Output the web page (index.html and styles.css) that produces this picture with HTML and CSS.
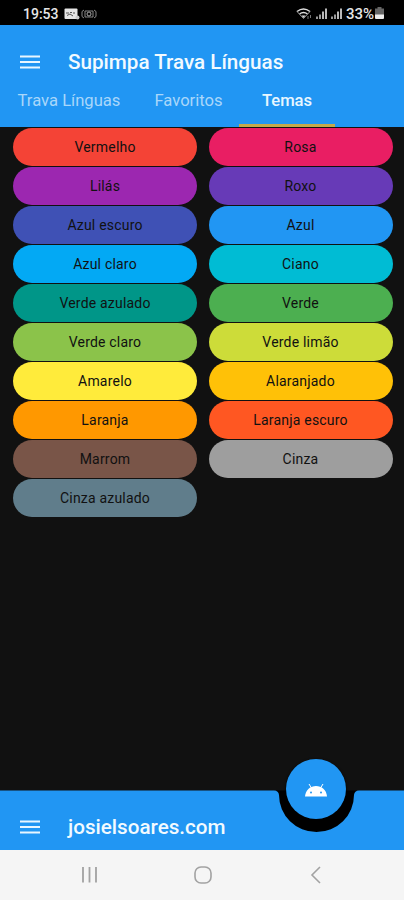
FILE: index.html
```html
<!DOCTYPE html>
<html lang="pt-BR">
  <head>
    <meta charset="UTF-8" />
    <meta name="viewport" content="width=device-width, initial-scale=1.0" />
    <title>Supimpa Trava Línguas</title>
    <link rel="stylesheet" href="styles.css">
  </head>
  <body>
    <!-- status bar -->
    <div class="status">
      <span class="clock">19:53</span>
      <svg class="notices" width="34" height="12" viewBox="0 0 34 12">
        <rect x="0.5" y="0.5" width="13" height="10.5" rx="1" fill="#e6e6e6" />
        <path d="M2 5h3M6 4.5h2M9 5h2M3 7.5l3-1.5 3 2" stroke="#555" fill="none" />
        <circle cx="13.5" cy="9.5" r="2" fill="#ccc" />
        <path d="M20 2l-2 1.500v5l2 1.500M30 2l2 1.500v5l-2 1.500M21 3h8v6h-8z" stroke="#888" fill="none" />
        <circle cx="25" cy="6" r="2" stroke="#aaa" fill="none" />
      </svg>
      <svg class="signals" width="48" height="14" viewBox="0 0 48 14">
        <path d="M1 4.500q6.500-5 13 0M3.500 7q4-3 8 0" stroke="#ddd" stroke-width="1.500" fill="none" />
        <path d="M1 4.500l6.500 7 6.500-7" stroke="#999" fill="none" />
        <path d="M5.500 8.500h4l-2 2.500z" fill="#ddd" />
        <path d="M12 9v3M14.500 8v3" stroke="#777" />
        <path d="M21 12V9.500M24 12V7.500M36 12V9.500M39 12V7.500" stroke="#aaa" stroke-width="1.800" />
        <path d="M27 12V4.500M30 12V1.500M42 12V4.500M45 12V1.500" stroke="#ccc" stroke-width="1.800" />
      </svg>
      <span class="percent">33%</span>
      <svg width="9" height="13" viewBox="0 0 9 13">
        <path d="M2.500 0h4v1.500H9V8H0V1.500h2.500z" fill="#666" />
        <path d="M0 7.500h9V11q0 1-1 1H1q-1 0-1-1z" fill="#eee" />
      </svg>
    </div>

    <!-- app bar + tabs -->
    <header class="appbar">
      <div class="title-row">
        <svg class="menu" width="20" height="14" viewBox="0 0 20 14">
          <path d="M0 1.500h20M0 7h20M0 12.500h20" stroke="#e8f6ff" stroke-width="2" />
        </svg>
        <h1>Supimpa Trava Línguas</h1>
      </div>
      <nav class="tabs">
        <a class="tab tab-first">Trava Línguas</a>
        <a class="tab tab-second">Favoritos</a>
        <a class="tab active">Temas</a>
      </nav>
    </header>

    <!-- themes -->
    <main class="themes">
      <button class="theme red">Vermelho</button>
      <button class="theme pink">Rosa</button>
      <button class="theme purple">Lilás</button>
      <button class="theme deep-purple">Roxo</button>
      <button class="theme indigo">Azul escuro</button>
      <button class="theme blue">Azul</button>
      <button class="theme light-blue">Azul claro</button>
      <button class="theme cyan">Ciano</button>
      <button class="theme teal">Verde azulado</button>
      <button class="theme green">Verde</button>
      <button class="theme light-green">Verde claro</button>
      <button class="theme lime">Verde limão</button>
      <button class="theme yellow">Amarelo</button>
      <button class="theme amber">Alaranjado</button>
      <button class="theme orange">Laranja</button>
      <button class="theme deep-orange">Laranja escuro</button>
      <button class="theme brown">Marrom</button>
      <button class="theme grey">Cinza</button>
      <button class="theme blue-grey">Cinza azulado</button>
    </main>

    <!-- bottom bar with the floating button -->
    <footer class="bottombar">
      <svg class="bar-shape" width="404" height="60" viewBox="0 0 404 60">
        <path d="M276 .5H357V45H276z" fill="#000" />
        <path d="M0 .5H274Q278.500 .5 279 5A37.500 37 0 0 0 354 5Q354.500 .5 359 .5H404V60H0z" fill="#2196f3" />
      </svg>
      <svg class="menu" width="20" height="14" viewBox="0 0 20 14">
        <path d="M0 1.500h20M0 7h20M0 12.500h20" stroke="#e8f6ff" stroke-width="2" />
      </svg>
      <span class="site">josielsoares.com</span>
      <button class="fab">
        <svg width="24" height="14" viewBox="0 0 24 14">
          <path d="M5 1l2.500 4M19 1l-2.500 4" stroke="#fff" stroke-width="1" />
          <path d="M1 13.500C1.500 7 6.500 3 12 3s10.500 4 11 10.500z" fill="#fff" />
          <circle cx="7" cy="9.500" r="1" fill="#2196f3" />
          <circle cx="17" cy="9.500" r="1" fill="#2196f3" />
        </svg>
      </button>
    </footer>

    <!-- android navigation -->
    <div class="sysnav">
      <svg width="18" height="18" viewBox="0 0 18 18">
        <path d="M2 1v15.500M8.500 1v15.500M15 1v15.500" stroke="#a2a2a2" stroke-width="1.800" />
      </svg>
      <svg width="18" height="18" viewBox="0 0 18 18">
        <rect x="1" y="1" width="16" height="16" rx="6" stroke="#a2a2a2" stroke-width="1.600" fill="none" />
      </svg>
      <svg width="18" height="18" viewBox="0 0 18 18">
        <path d="M13 1L5 9l8 8" stroke="#a2a2a2" stroke-width="1.600" fill="none" />
      </svg>
    </div>
  </body>
</html>
```
FILE: styles.css
```css
body {
  margin: 0;
  height: 900px;
  display: flex;
  flex-direction: column;
  overflow: hidden;
  background-color: #111;
  font-family: Roboto, sans-serif;
}

svg {
  display: block;
  flex: none;
}

/* status bar */
.status {
  height: 25px;
  box-sizing: border-box;
  display: flex;
  align-items: center;
  padding: 2px 20px 0 23px;
  background-color: #000;
  color: #e6e6e6;
  font-size: 14px;
  font-weight: 500;
}
.notices {
  margin-left: 5px;
}
.signals {
  margin-left: auto;
  margin-right: 2px;
}
.percent {
  font-size: 15px;
  margin-right: 1px;
}

/* app bar */
.appbar {
  height: 102px;
  background-color: #2196f3;
}
.title-row {
  height: 63px;
  display: flex;
  align-items: center;
  padding: 11px 0 0 20px;
  box-sizing: border-box;
}
.menu {
  margin-right: 28px;
}
h1,
.site {
  margin: 0;
  color: #f2faff;
  font-size: 20.65px;
  font-weight: 500;
  line-height: 24px;
  white-space: nowrap;
}

/* tabs */
.tabs {
  height: 39px;
  display: flex;
}
.tab {
  box-sizing: border-box;
  height: 39px;
  padding-top: 3px;
  color: #a9d7fa;
  font-size: 16.6px;
  line-height: 20px;
  text-align: center;
  white-space: nowrap;
}
.tab-first {
  width: 138px;
}
.tab-second {
  width: 101px;
}
.active {
  width: 96px;
  color: #e8f6ff;
  font-weight: 500;
  border-bottom: 3px solid #c4a94c;
}

/* themes */
.themes {
  flex: 1;
  display: grid;
  grid-template-columns: 184px 184px;
  grid-auto-rows: 38px;
  align-content: start;
  gap: 1px 11.5px;
  padding: 1px 12px 0 13px;
}
.theme {
  border: none;
  border-radius: 19px;
  padding: 0 0 1px;
  color: #111;
  font-family: inherit;
  font-size: 14px;
  letter-spacing: 0.2px;
}
.red { background-color: #f44336; }
.pink { background-color: #e91e63; }
.purple { background-color: #9c27b0; }
.deep-purple { background-color: #673ab7; }
.indigo { background-color: #3f51b5; }
.blue { background-color: #2196f3; }
.light-blue { background-color: #03a9f4; }
.cyan { background-color: #00bcd4; }
.teal { background-color: #009688; }
.green { background-color: #4caf50; }
.light-green { background-color: #8bc34a; }
.lime { background-color: #cddc39; }
.yellow { background-color: #ffeb3b; }
.amber { background-color: #ffc107; }
.orange { background-color: #ff9800; }
.deep-orange { background-color: #ff5722; }
.brown { background-color: #795548; }
.grey { background-color: #9e9e9e; }
.blue-grey { background-color: #607d8b; }

/* bottom bar */
.bottombar {
  position: relative;
  height: 60px;
  box-sizing: border-box;
  display: flex;
  align-items: center;
  padding: 14px 0 0 20px;
}
.bar-shape {
  position: absolute;
  top: 0;
  left: 0;
}
.bottombar .menu,
.site {
  position: relative;
}
.fab {
  position: absolute;
  top: -31px;
  left: 286px;
  width: 60px;
  height: 60px;
  display: flex;
  align-items: center;
  justify-content: center;
  padding: 1px 0 0;
  border: none;
  border-radius: 50%;
  background-color: #2196f3;
  box-shadow: 0 1px 3px #000;
}

/* android navigation */
.sysnav {
  height: 50px;
  display: flex;
  align-items: center;
  gap: 95px;
  padding-left: 81px;
  background-color: #f5f5f5;
}
```
